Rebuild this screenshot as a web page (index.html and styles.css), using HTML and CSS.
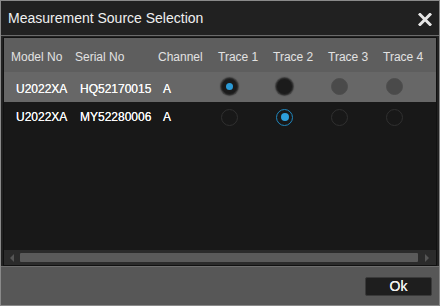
FILE: index.html
```html
<!DOCTYPE html>
<html lang="en">

<head>
    <meta charset="UTF-8">
    <title>Measurement Source Selection</title>
    <link rel="stylesheet" href="styles.css">
</head>

<body>
    <div class="dialog">
        <div class="titlebar">
            <span class="title">Measurement Source Selection</span>
            <svg class="close" width="14" height="13" viewBox="0 0 14 13">
                <path d="M2 1.5 L12 11.5 M12 1.5 L2 11.5" stroke="#e6e6e6" stroke-width="3" stroke-linecap="square" />
            </svg>
        </div>

        <div class="content">
            <div class="panel">
                <div class="grid-row header">
                    <div class="cell">Model No</div>
                    <div class="cell">Serial No</div>
                    <div class="cell">Channel</div>
                    <div class="cell">Trace 1</div>
                    <div class="cell">Trace 2</div>
                    <div class="cell">Trace 3</div>
                    <div class="cell">Trace 4</div>
                </div>

                <div class="grid-row source selected">
                    <div class="cell">U2022XA</div>
                    <div class="cell">HQ52170015</div>
                    <div class="cell">A</div>
                    <div class="cell"><span class="radio on"></span></div>
                    <div class="cell"><span class="radio"></span></div>
                    <div class="cell"><span class="radio disabled"></span></div>
                    <div class="cell"><span class="radio disabled"></span></div>
                </div>

                <div class="grid-row source">
                    <div class="cell">U2022XA</div>
                    <div class="cell">MY52280006</div>
                    <div class="cell">A</div>
                    <div class="cell"><span class="radio"></span></div>
                    <div class="cell"><span class="radio on"></span></div>
                    <div class="cell"><span class="radio"></span></div>
                    <div class="cell"><span class="radio"></span></div>
                </div>

                <div class="filler"></div>

                <div class="scrollbar">
                    <div class="arrow left"></div>
                    <div class="thumb"></div>
                    <div class="arrow right"></div>
                </div>
            </div>
        </div>

        <div class="footer">
            <button class="btn-ok">Ok</button>
        </div>
    </div>
</body>

</html>
```

FILE: styles.css
```css
/* Page */
body {
    margin: 0;
    background: #222;
    font-family: 'Liberation Sans', Arial, sans-serif;
}

/* Dialog frame */
.dialog {
    width: 440px;
    height: 306px;
    box-sizing: border-box;
    border: 1px solid #8a8a8a;
    background: #222;
    display: flex;
    flex-direction: column;
}

/* Title bar */
.titlebar {
    height: 34px;
    flex-shrink: 0;
    display: flex;
    align-items: center;
    justify-content: space-between;
    padding: 0 7px 0 7px;
    border-bottom: 1px solid #6a6a6a;
    background: #212121;
}

.title {
    color: #f0f0f0;
    font-size: 14px;
    padding-bottom: 1px;
}

.close {
    display: block;
    margin-top: 2px;
}

/* Table area */
.content {
    height: 230px;
    box-sizing: border-box;
    padding: 1px 2px 0 2px;
    flex-shrink: 0;
}

.panel {
    height: 229px;
    box-sizing: border-box;
    border: 1px solid #111;
    background: #181818;
    display: flex;
    flex-direction: column;
}

.grid-row {
    display: grid;
    grid-template-columns: 64px 83px 60px repeat(4, 55px);
    align-items: center;
}

.header {
    height: 34px;
    background: #5e5e5e;
    color: #e2e2e2;
    font-size: 12px;
}

.header .cell {
    padding: 4px 0 0 7px;
}

.source {
    height: 30px;
    color: #fafafa;
    font-size: 12px;
    text-shadow: 0 0 0.4px #fff;
}

.source .cell {
    padding-left: 12px;
    display: flex;
    align-items: center;
}

.source.selected {
    background: #676767;
}

.source.selected .cell:nth-child(-n+3) {
    padding-top: 3px;
}

/* Radio buttons */
.radio {
    width: 17px;
    height: 17px;
    box-sizing: border-box;
    border-radius: 50%;
    border: 1px solid #303030;
    display: flex;
    align-items: center;
    justify-content: center;
    margin-left: -1px;
}

.source .cell:nth-child(n+4) {
    padding-left: 11px;
}

.selected .radio {
    background: #1b1b1b;
    border-color: #2a2a2a;
    box-shadow: 0 0 1px 1px rgba(20, 20, 20, 0.5);
    margin-top: -2px;
}

.selected .radio.disabled {
    background: #4a4a4a;
    border-color: #4e4e4e;
    box-shadow: none;
}

.radio.on::after {
    content: "";
    width: 7px;
    height: 7px;
    border-radius: 50%;
    background: #2b9ad6;
}

.source:not(.selected) .radio.on {
    border-color: #1f86bd;
}

.source:not(.selected) .radio.on::after {
    width: 8px;
    height: 8px;
    background: #2d9fdc;
}

.filler {
    flex: 1;
}

/* Horizontal scrollbar */
.scrollbar {
    height: 15px;
    flex-shrink: 0;
    background: #2b2b2b;
    display: flex;
    align-items: center;
}

.thumb {
    flex: 1;
    height: 9px;
    background: #5a5a5a;
    border-radius: 1px;
}

.arrow {
    width: 16px;
    height: 15px;
    display: flex;
    align-items: center;
    justify-content: center;
}

.arrow.right {
    width: 18px;
}

.arrow::before {
    content: "";
    border-top: 4px solid transparent;
    border-bottom: 4px solid transparent;
}

.arrow.left::before {
    border-right: 4px solid #555;
}

.arrow.right::before {
    border-left: 4px solid #555;
}

/* Footer */
.footer {
    flex: 1;
    border-top: 1px solid #6e6e6e;
    background: #575757;
    display: flex;
    justify-content: flex-end;
    align-items: flex-start;
    padding: 10px 7px 0 0;
}

.btn-ok {
    width: 67px;
    height: 19px;
    padding: 0;
    border: 1px solid #3a3a3a;
    border-radius: 2px;
    background: #1e1e1e;
    color: #f0f0f0;
    font-family: 'Liberation Sans', Arial, sans-serif;
    font-size: 14px;
    line-height: 17px;
    text-shadow: 0 0 0.5px #fff;
}
```
